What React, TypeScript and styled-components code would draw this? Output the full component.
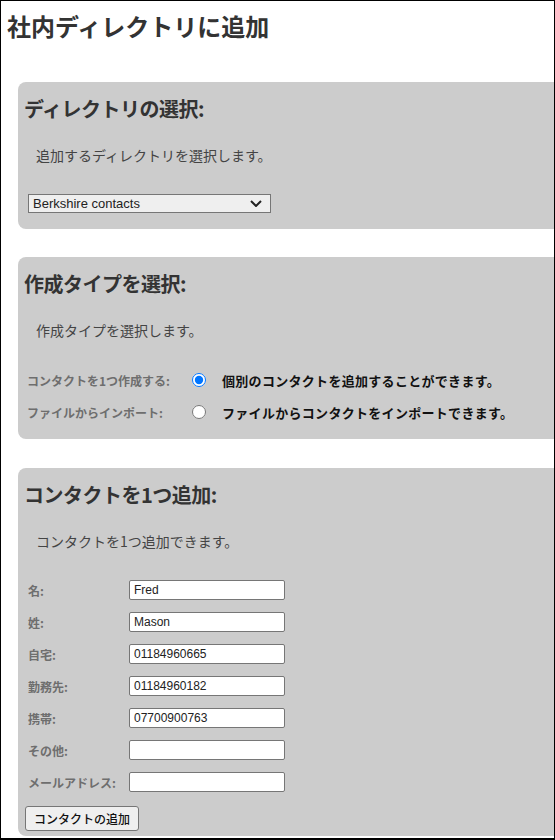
import styled, { createGlobalStyle } from 'styled-components';

const GlobalStyle = createGlobalStyle`
  html, body {
    margin: 0;
    padding: 0;
    background: #ffffff;
  }
  body {
    font-family: "Noto Sans CJK JP", "Liberation Sans", sans-serif;
  }
`;

const Frame = styled.div`
  box-sizing: border-box;
  width: 555px;
  height: 840px;
  border: 1px solid #000;
  border-bottom-width: 2px;
  overflow: hidden;
  padding: 0 0 0 17px;
`;

const Title = styled.h1`
  margin: 0 0 0 -11px;
  padding-top: 10px;
  font-size: 24px;
  line-height: 30px;
  font-weight: bold;
  color: #333;
  letter-spacing: 0;
`;

const Panel = styled.section<{ $top: number; $bottom: number }>`
  margin-top: ${({ $top }) => $top}px;
  margin-right: -40px;
  padding: 0 0 ${({ $bottom }) => $bottom}px 6px;
  background: #cccccc;
  border-radius: 8px;
`;

const Heading = styled.h2`
  margin: 0;
  padding-top: 13px;
  font-size: 20px;
  line-height: 28px;
  font-weight: bold;
  color: #333;
  letter-spacing: -0.5px;
`;

const Description = styled.p`
  margin: 22px 0 0 12px;
  font-size: 14px;
  line-height: 20px;
  color: #444;
`;

const SelectWrap = styled.div`
  position: relative;
  margin: 29px 0 0 4px;
  width: 243px;
  height: 19px;
`;

const Select = styled.select`
  display: block;
  box-sizing: border-box;
  width: 100%;
  height: 19px;
  appearance: none;
  margin: 0;
  padding: 0 0 0 4px;
  border: 1px solid #767676;
  border-radius: 0;
  background: #efefef;
  font-family: "Liberation Sans", Arial, sans-serif;
  font-size: 13px;
  line-height: 17px;
  color: #222;
  outline: none;
`;

const Chevron = styled.svg`
  position: absolute;
  right: 9px;
  top: 6px;
  pointer-events: none;
`;

const RadioList = styled.div`
  margin: 24px 0 0 3px;
`;

const RadioRow = styled.label`
  display: grid;
  grid-template-columns: 149px 14px auto;
  column-gap: 16px;
  align-items: center;
  height: 32px;
`;

const FieldLabel = styled.span`
  font-size: 12px;
  font-weight: bold;
  color: #6e6e6e;
  white-space: nowrap;
`;

const Radio = styled.input`
  width: 14px;
  height: 14px;
  margin: 0;
  accent-color: #0075ff;
`;

const RadioText = styled.span`
  font-size: 13px;
  font-weight: bold;
  color: #111;
  letter-spacing: 0.3px;
  white-space: nowrap;
`;

const Form = styled.div`
  margin: 23px 0 0 4px;
  display: grid;
  grid-template-columns: 101px 156px;
  grid-auto-rows: 32px;
  align-items: center;
`;

const TextInput = styled.input`
  box-sizing: border-box;
  width: 156px;
  height: 20px;
  margin: 0;
  padding: 0 4px;
  border: 1px solid #767676;
  border-radius: 2px;
  background: #fff;
  font-family: "Liberation Sans", Arial, sans-serif;
  font-size: 12px;
  color: #222;
  outline: none;
`;

const Button = styled.button`
  display: block;
  box-sizing: border-box;
  margin: 8px 0 0 1px;
  height: 25px;
  width: 114px;
  padding: 0;
  border: 1px solid #767676;
  border-radius: 3px;
  background: #efefef;
  font-family: "Noto Sans CJK JP", sans-serif;
  font-size: 12px;
  font-weight: 500;
  color: #111;
`;

const fields = [
  { label: '名:', value: 'Fred' },
  { label: '姓:', value: 'Mason' },
  { label: '自宅:', value: '01184960665' },
  { label: '勤務先:', value: '01184960182' },
  { label: '携帯:', value: '07700900763' },
  { label: 'その他:', value: '' },
  { label: 'メールアドレス:', value: '' },
];

const App = () => {
  return (
    <>
      <GlobalStyle />
      <Frame>
        <Title>社内ディレクトリに追加</Title>

        <Panel $top={41} $bottom={16}>
          <Heading>ディレクトリの選択:</Heading>
          <Description>追加するディレクトリを選択します。</Description>
          <SelectWrap>
            <Select defaultValue="berkshire">
              <option value="berkshire">Berkshire contacts</option>
            </Select>
            <Chevron width="12" height="7" viewBox="0 0 12 7">
              <path d="M1 1l5 5 5-5" fill="none" stroke="#222" strokeWidth="2" />
            </Chevron>
          </SelectWrap>
        </Panel>

        <Panel $top={28} $bottom={11}>
          <Heading>作成タイプを選択:</Heading>
          <Description>作成タイプを選択します。</Description>
          <RadioList>
            <RadioRow>
              <FieldLabel>コンタクトを1つ作成する:</FieldLabel>
              <Radio type="radio" name="type" defaultChecked />
              <RadioText>個別のコンタクトを追加することができます。</RadioText>
            </RadioRow>
            <RadioRow>
              <FieldLabel>ファイルからインポート:</FieldLabel>
              <Radio type="radio" name="type" />
              <RadioText>ファイルからコンタクトをインポートできます。</RadioText>
            </RadioRow>
          </RadioList>
        </Panel>

        <Panel $top={29} $bottom={5}>
          <Heading>コンタクトを1つ追加:</Heading>
          <Description>コンタクトを1つ追加できます。</Description>
          <Form>
            {fields.map((field) => [
              <FieldLabel key={field.label}>{field.label}</FieldLabel>,
              <TextInput key={field.label + '-input'} type="text" defaultValue={field.value} />,
            ])}
          </Form>
          <Button type="button">コンタクトの追加</Button>
        </Panel>
      </Frame>
    </>
  );
};

export default App;
